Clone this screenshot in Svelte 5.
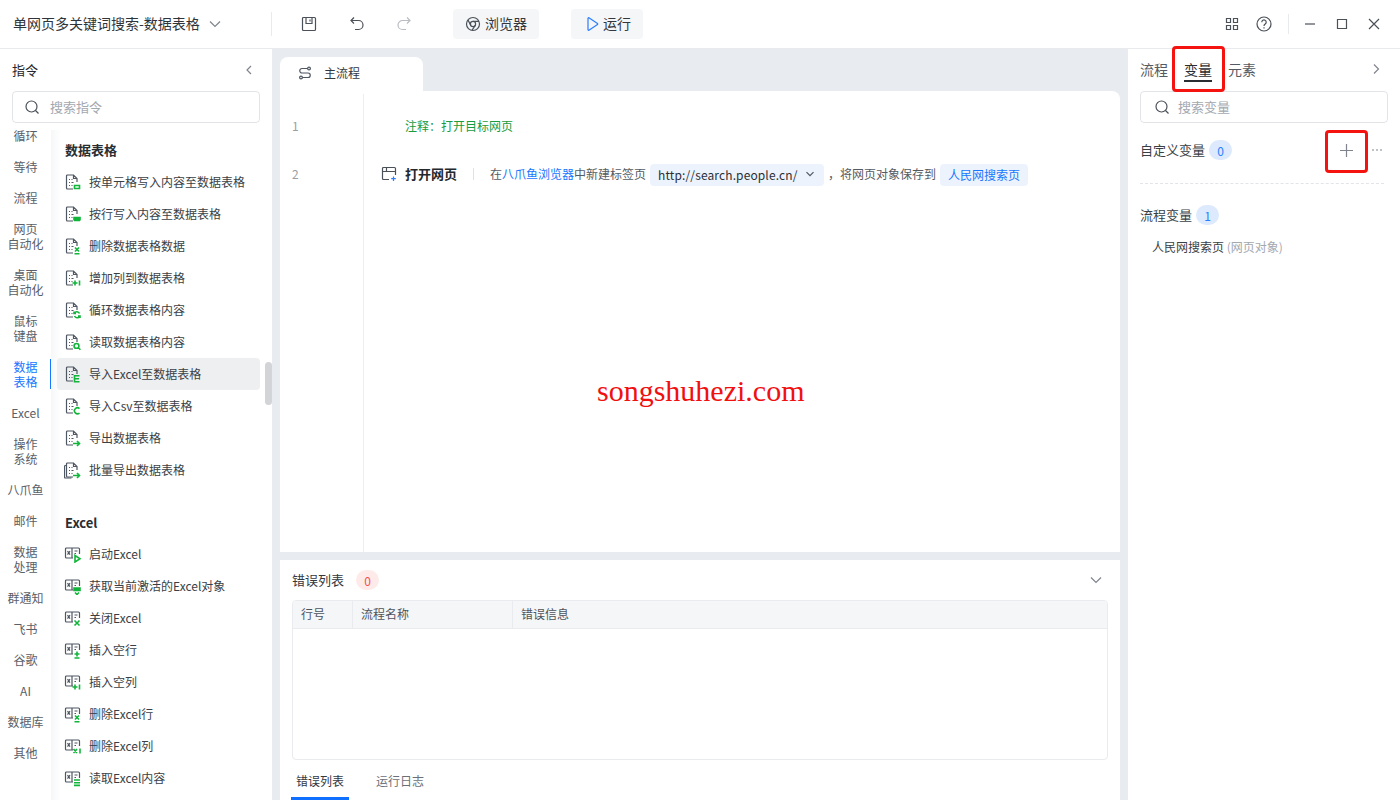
<script>
const rail = [
  ['循环'], ['等待'], ['流程'], ['网页', '自动化'], ['桌面', '自动化'], ['鼠标', '键盘'],
  ['数据', '表格'], ['Excel'], ['操作', '系统'], ['八爪鱼'], ['邮件'], ['数据', '处理'],
  ['群通知'], ['飞书'], ['谷歌'], ['AI'], ['数据库'], ['其他']
]

// green corner marks on the command icons
const marks = {
  cell: 'M10.500 12.500h5v3h-5z',
  row: 'M10 12.500h6v.8h-6zM10 14h6v.8h-6zM10 15.500h6',
  del: 'M11 10.500l4 4m0-4l-4 4M10.500 16.800h5',
  addcol: 'M8.500 14h5M11 11.500v5M15.500 11.500v5',
  loop: 'M15.500 12.500a3 3 0 0 0-5.200-.5M10.500 15a3 3 0 0 0 5.200.5M10 10.500V12.500h2M16 17v-2h-2',
  find: 'M12.500 10.500a2.400 2.400 0 1 1 0 4.800a2.400 2.400 0 0 1 0-4.800zM14.400 14.800l2 2',
  e: 'M15.500 10.800h-5v6h5M10.500 13.800h4.500',
  c: 'M15.500 11.600a3 3 0 1 0 0 4.400',
  out: 'M9 14.500h6.500M13 12l2.500 2.500L13 17',
  play: 'M11 10.500v6.500l5-3.250z',
  save: 'M10 11h6v2.500h-6zM10 12h6M11 15.500l2 2l2-2',
  close: 'M10.500 11.500l5 5m0-5l-5 5',
  addrow: 'M13 10.500v5M10.500 13h5M10.500 17h5',
  delrow: 'M11 10.500l4 4m0-4l-4 4M10.500 16.800h5',
  delcol: 'M9.500 12l3.500 4m0-4l-3.500 4M16 11.500v5',
  read: 'M10 11h6M10 13.700h6M10 16.400h6'
}

const groups = [
  {
    title: '数据表格',
    icon: 'doc',
    rows: [
      ['按单元格写入内容至数据表格', 'cell'],
      ['按行写入内容至数据表格', 'row'],
      ['删除数据表格数据', 'del'],
      ['增加列到数据表格', 'addcol'],
      ['循环数据表格内容', 'loop'],
      ['读取数据表格内容', 'find'],
      ['导入Excel至数据表格', 'e', true],
      ['导入Csv至数据表格', 'c'],
      ['导出数据表格', 'out'],
      ['批量导出数据表格', 'out', false, true]
    ]
  },
  {
    title: 'Excel',
    icon: 'xls',
    rows: [
      ['启动Excel', 'play'],
      ['获取当前激活的Excel对象', 'save'],
      ['关闭Excel', 'close'],
      ['插入空行', 'addrow'],
      ['插入空列', 'addcol'],
      ['删除Excel行', 'delrow'],
      ['删除Excel列', 'delcol'],
      ['读取Excel内容', 'read']
    ]
  }
]
</script>

<div class="app">
  <header class="topbar">
    <div class="title">
      <span>单网页多关键词搜索-数据表格</span>
      <svg width="12" height="12" viewBox="0 0 12 12" class="ml"><path d="M1 3.500l5 5 5-5" class="ln grey" /></svg>
    </div>
    <div class="tools">
      <svg width="16" height="16" viewBox="0 0 16 16"><path d="M2.500 1.500h11a1 1 0 0 1 1 1v11a1 1 0 0 1-1 1h-11a1 1 0 0 1-1-1v-11a1 1 0 0 1 1-1zM5 1.500v6h6v-6M9 3.500v2" class="ln dark" /></svg>
      <svg class="undo" width="16" height="16" viewBox="0 0 16 16"><path d="M5 1.500L2 4.500l3 3M2 4.500h7.500a4.500 4.500 0 0 1 0 9H6" class="ln dark" /></svg>
      <svg class="redo" width="16" height="16" viewBox="0 0 16 16"><path d="M11 1.500l3 3-3 3M14 4.500H6.500a4.500 4.500 0 0 0 0 9H10" class="ln faint" /></svg>
      <div class="btn browser">
        <svg width="16" height="16" viewBox="0 0 16 16"><circle cx="8" cy="8" r="6.500" class="ln dark" /><circle cx="8" cy="8" r="2.600" class="ln dark" /><path d="M8 5.400h6M5.800 9.400L3 4M10.200 9.400L7 14.400" class="ln dark" /></svg>
        <span>浏览器</span>
      </div>
      <div class="btn run">
        <svg width="14" height="16" viewBox="0 0 14 16"><path d="M3 2.200v11.600a.6.6 0 0 0 .9.5l8.600-5.800a.6.6 0 0 0 0-1L3.900 1.700a.6.6 0 0 0-.9.5z" class="ln blue" /></svg>
        <span>运行</span>
      </div>
    </div>
    <div class="winctl">
      <svg width="14" height="14" viewBox="0 0 14 14"><path d="M1.500 1.500h4v4h-4zM8.500 1.500h4v4h-4zM1.500 8.500h4v4h-4zM8.500 8.500h4v4h-4z" class="ln dark" /></svg>
      <svg class="help" width="16" height="16" viewBox="0 0 16 16"><circle cx="8" cy="8" r="7" class="ln dark" /><path d="M5.800 6.200a2.200 2.200 0 1 1 3.400 1.800c-.8.500-1.200 1-1.200 1.900M8 11.200v1.200" class="ln dark" /></svg>
      <i class="vsep"></i>
      <svg class="min" width="12" height="12" viewBox="0 0 12 12"><path d="M1 6h10" class="ln dark" /></svg>
      <svg class="max" width="12" height="12" viewBox="0 0 12 12"><path d="M1.500 1.500h9v9h-9z" class="ln dark" /></svg>
      <svg class="cls" width="12" height="12" viewBox="0 0 12 12"><path d="M1 1l10 10M11 1L1 11" class="ln dark" /></svg>
    </div>
  </header>

  <div class="body">
    <aside class="left">
      <div class="left-head">
        <span>指令</span>
        <svg width="10" height="10" viewBox="0 0 10 10"><path d="M7 1L3 5l4 4" class="ln grey" /></svg>
      </div>
      <div class="search">
        <svg width="16" height="16" viewBox="0 0 16 16"><circle cx="7.500" cy="7.500" r="5.500" class="ln dark" /><path d="M11.500 11.500l3 3" class="ln dark" /></svg>
        <span>搜索指令</span>
      </div>
      <div class="cmds">
        <nav class="rail">
          {#each rail as lines}
            <div class="rail-item" class:on={lines[0] === '数据' && lines[1] === '表格'}>
              {#each lines as l}<div>{l}</div>{/each}
            </div>
          {/each}
        </nav>
        <div class="list">
          {#each groups as g}
            <section class="group">
              <h4>{g.title}</h4>
              {#each g.rows as r}
                <div class="row" class:active={r[2]}>
                  <svg width="18" height="18" viewBox="0 0 18 18">
                    {#if g.icon === 'doc'}
                      <path d="M9 16H3.500a1 1 0 0 1-1-1V3a1 1 0 0 1 1-1h6l3.500 3.500V9M9.500 2v3.500H13M5 6.500h1M7.500 6.500h1M5 9.500h1M7.500 9.500h2M5 12.500h1M7.500 12.500h1" class="ln slate" />
                      {#if r[3]}<path d="M2.500 4.500H1.500a1 1 0 0 0-1 1V16a1 1 0 0 0 1 1h6" class="ln slate" />{/if}
                    {:else}
                      <path d="M8 3H2.500a1 1 0 0 0-1 1v8a1 1 0 0 0 1 1H8zM8 3h6.500a1 1 0 0 1 1 1v5M8 13h1M10.500 6h3M10.500 8.500h1.500M3.500 6.200l2.500 3.500m0-3.500L3.500 9.700" class="ln slate" />
                    {/if}
                    <path d={marks[r[1]]} class="ln green" />
                  </svg>
                  <span>{r[0]}</span>
                </div>
              {/each}
            </section>
          {/each}
          <div class="thumb"></div>
        </div>
      </div>
    </aside>

    <main class="center">
      <div class="tab">
        <svg width="14" height="14" viewBox="0 0 14 14"><path d="M9.500 2.500H4a2.200 2.200 0 0 0 0 4.500h6a2.200 2.200 0 0 1 0 4.500H4.500" class="ln slate" /><circle cx="11" cy="2.500" r="1.400" class="ln slate" /><circle cx="3" cy="11.500" r="1.400" class="ln slate" /></svg>
        <span>主流程</span>
      </div>
      <div class="editor">
        <div class="code-line first">
          <span class="no">1</span>
          <span class="note">注释：打开目标网页</span>
        </div>
        <div class="code-line">
          <span class="no">2</span>
          <svg class="step-ico" width="16" height="16" viewBox="0 0 16 16"><path d="M8 13.500H2.500a1 1 0 0 1-1-1v-10a1 1 0 0 1 1-1h11a1 1 0 0 1 1 1V9M1.500 5.500h13M5.500 1.500v4" class="ln dark" /><path d="M12.500 10.500v4.500M10.200 12.700h4.600" class="ln blue" /></svg>
          <b>打开网页</b>
          <i class="step-sep"></i>
          <span class="desc">在<a>八爪鱼浏览器</a>中新建标签页</span>
          <span class="chip url">http://search.people.cn/
            <svg width="8" height="8" viewBox="0 0 8 8"><path d="M.5 2.200L4 5.700l3.500-3.500" class="ln slate" /></svg>
          </span>
          <span class="desc after">，将网页对象保存到</span>
          <span class="chip var">人民网搜索页</span>
        </div>
        <div class="mark">songshuhezi.com</div>
      </div>
      <div class="errors">
        <div class="err-head">
          <span>错误列表</span>
          <em class="badge red">0</em>
          <svg width="12" height="12" viewBox="0 0 12 12"><path d="M1 3.500l5 5 5-5" class="ln grey" /></svg>
        </div>
        <div class="table">
          <div class="thead">
            <div class="c1">行号</div>
            <div class="c2">流程名称</div>
            <div class="c3">错误信息</div>
          </div>
        </div>
        <div class="err-tabs">
          <span class="sel">错误列表</span>
          <span>运行日志</span>
        </div>
      </div>
    </main>

    <aside class="right">
      <div class="r-tabs">
        <span>流程</span>
        <span class="sel">变量</span>
        <span>元素</span>
        <svg width="10" height="12" viewBox="0 0 10 12"><path d="M3 1.500L7.500 6 3 10.500" class="ln grey" /></svg>
      </div>
      <div class="search r">
        <svg width="16" height="16" viewBox="0 0 16 16"><circle cx="7.500" cy="7.500" r="5.500" class="ln dark" /><path d="M11.500 11.500l3 3" class="ln dark" /></svg>
        <span>搜索变量</span>
      </div>
      <div class="var-head custom">
        <span>自定义变量</span>
        <em class="badge">0</em>
        <svg class="plus" width="13" height="13" viewBox="0 0 13 13"><path d="M6.500 0v13M0 6.500h13" class="ln grey" /></svg>
        <svg class="dots" width="10" height="2" viewBox="0 0 10 2"><path d="M0 1h2M4 1h2M8 1h2" class="ln grey" /></svg>
      </div>
      <div class="dash"></div>
      <div class="var-head">
        <span>流程变量</span>
        <em class="badge">1</em>
      </div>
      <div class="var-row">人民网搜索页 <span>(网页对象)</span></div>
      <div class="redbox a"></div>
      <div class="redbox b"></div>
    </aside>
  </div>
</div>

<style>
  :global(body) {
    margin: 0;
    background: #fff;
  }

  .app {
    width: 1400px;
    height: 800px;
    display: flex;
    flex-direction: column;
    overflow: hidden;
    font-family: "Noto Sans CJK SC", "Noto Sans", sans-serif;
    font-size: 12px;
    color: #33383f;
  }

  svg {
    flex: none;
    display: block;
  }

  .ln {
    fill: none;
    stroke-width: 1.2;
  }
  .dark { stroke: #4b5159; }
  .grey { stroke: #80858d; }
  .faint { stroke: #b9bcc2; }
  .slate { stroke: #4f5762; stroke-width: 1.2; }
  .blue { stroke: #2a7fff; }
  .green { stroke: #10b53a; stroke-width: 1.6; }

  /* top bar */
  .topbar {
    height: 48px;
    flex: none;
    display: flex;
    align-items: center;
    border-bottom: 1px solid #e8eaee;
  }
  .title {
    width: 258px;
    height: 24px;
    margin-left: 13px;
    display: flex;
    align-items: center;
    border-right: 1px solid #e8eaee;
    font-size: 14px;
    color: #2f343a;
  }
  .title span { padding-bottom: 2px; }
  .ml { margin-left: 9px; }
  .tools {
    display: flex;
    align-items: center;
    margin-left: 29px;
  }
  .undo { margin-left: 32px; }
  .redo { margin-left: 31px; }
  .btn {
    height: 30px;
    display: flex;
    align-items: center;
    gap: 4px;
    border-radius: 4px;
    background: #f5f6f8;
    font-size: 14px;
  }
  .btn span { padding-bottom: 2px; }
  .browser {
    margin-left: 41px;
    width: 86px;
    padding-left: 12px;
    box-sizing: border-box;
  }
  .run {
    margin-left: 32px;
    width: 72px;
    padding-left: 14px;
    box-sizing: border-box;
  }
  .winctl {
    margin-left: auto;
    display: flex;
    align-items: center;
    padding-right: 20px;
  }
  .help { margin-left: 17px; }
  .vsep {
    width: 1px;
    height: 20px;
    background: #e8eaee;
    margin: 0 15px 0 16px;
  }
  .max { margin-left: 20px; }
  .cls { margin-left: 20px; }

  .body {
    flex: 1;
    min-height: 0;
    display: flex;
  }

  /* left column */
  .left {
    width: 272px;
    flex: none;
    display: flex;
    flex-direction: column;
    background: #fff;
  }
  .left-head {
    height: 42px;
    flex: none;
    padding: 0 18px 0 12px;
    display: flex;
    align-items: center;
    justify-content: space-between;
    font-size: 13px;
    color: #23272c;
  }
  .left-head span { padding-bottom: 2px; }
  .search {
    flex: none;
    height: 32px;
    width: 248px;
    margin-left: 12px;
    box-sizing: border-box;
    display: flex;
    align-items: center;
    gap: 10px;
    padding-left: 11px;
    border: 1px solid #e2e4e8;
    border-radius: 4px;
    font-size: 13px;
    color: #a4a8af;
  }
  .search span { padding-bottom: 2px; }
  .cmds {
    flex: 1;
    min-height: 0;
    margin-top: 7px;
    display: flex;
    overflow: hidden;
  }
  .rail {
    width: 51px;
    flex: none;
    margin-top: -10px;
    text-align: center;
    color: #5a6068;
  }
  .rail-item {
    padding: 8px 0;
    line-height: 15px;
    position: relative;
  }
  .rail-item.on {
    color: #1677ff;
  }
  .rail-item.on::after {
    content: '';
    position: absolute;
    right: -1px;
    top: 8px;
    bottom: 8px;
    width: 2px;
    background: #1677ff;
  }
  .list {
    flex: 1;
    position: relative;
    background: linear-gradient(90deg, #f6f7f8, #fff 10px);
  }
  .group + .group { margin-top: 16px; }
  h4 {
    margin: 0;
    height: 16px;
    padding: 12px 0 8px 14px;
    line-height: 16px;
    font-size: 13px;
    font-weight: 700;
    color: #2a2e33;
  }
  .group + .group h4 {
    padding: 13px 0 7px 14px;
  }
  .row {
    width: 203px;
    height: 32px;
    margin-left: 6px;
    padding-left: 7px;
    box-sizing: border-box;
    display: flex;
    align-items: center;
    gap: 7px;
    border-radius: 4px;
    color: #3a3f46;
  }
  .row span { padding-bottom: 2px; }
  .row svg { margin-bottom: 1px; }
  .row.active { background: #eeeff1; }
  .thumb {
    position: absolute;
    right: 0;
    top: 232px;
    width: 7px;
    height: 43px;
    border-radius: 4px;
    background: #d2d4d8;
  }

  /* middle column */
  .center {
    flex: 1;
    min-width: 0;
    background: #e8ebf0;
    padding: 8px 8px 0;
    display: flex;
    flex-direction: column;
    position: relative;
  }
  .tab {
    width: 143px;
    height: 34px;
    flex: none;
    box-sizing: border-box;
    padding: 0 0 2px 18px;
    display: flex;
    align-items: center;
    gap: 12px;
    background: #fff;
    border-radius: 8px 8px 0 0;
  }
  .tab span { padding-bottom: 2px; }
  .editor {
    height: 461px;
    flex: none;
    background: #fff;
    border-radius: 0 8px 0 0;
    position: relative;
    display: flex;
    flex-direction: column;
  }
  .editor::before {
    content: '';
    position: absolute;
    left: 83px;
    top: 3px;
    bottom: 0;
    width: 1px;
    background: #eceef1;
  }
  .code-line {
    height: 48px;
    flex: none;
    display: flex;
    align-items: center;
  }
  .code-line.first { margin-top: 11px; }
  .no {
    width: 101px;
    flex: none;
    padding-left: 12px;
    padding-bottom: 2px;
    box-sizing: border-box;
    color: #9a9ea5;
  }
  .first .no { width: 125px; }
  .note { color: #1a9b3c; padding-bottom: 2px; }
  .step-ico { margin-right: 8px; }
  .code-line b {
    font-size: 13px;
    color: #24282d;
    font-weight: 700;
    padding-bottom: 2px;
  }
  .step-sep {
    width: 1px;
    height: 12px;
    margin: 0 16px;
    background: #dfe1e5;
  }
  .desc { color: #555b63; padding-bottom: 2px; }
  .desc a { color: #1677ff; }
  .after { margin: 0 4px; }
  .chip {
    height: 22px;
    margin-top: 2px;
    padding: 0 8px 2px;
    box-sizing: border-box;
    display: inline-flex;
    align-items: center;
    border-radius: 4px;
    background: #edf3fd;
  }
  .url {
    margin-left: 4px;
    width: 174px;
    color: #2b2f35;
    letter-spacing: .12px;
    justify-content: space-between;
    padding-right: 10px;
  }
  .var { color: #1677ff; }
  .mark {
    position: absolute;
    left: 317px;
    top: 283px;
    font-family: "Liberation Serif", serif;
    font-size: 30px;
    line-height: 34px;
    color: #f01010;
  }
  .errors {
    flex: 1;
    min-height: 0;
    margin-top: 8px;
    background: #fff;
    padding: 0 12px;
    display: flex;
    flex-direction: column;
  }
  .err-head {
    height: 40px;
    flex: none;
    display: flex;
    align-items: center;
    font-size: 13px;
    color: #33383f;
  }
  .err-head span { padding-bottom: 2px; }
  .err-head svg { margin-left: auto; margin-right: 6px; }
  .err-head .badge { margin-left: 12px; }
  .badge {
    min-width: 23px;
    height: 20px;
    border-radius: 10px;
    margin-left: 4px;
    display: inline-flex;
    align-items: center;
    justify-content: center;
    font-style: normal;
    font-size: 12px;
    color: #2a7fff;
    background: #dde9fd;
  }
  .badge.red {
    color: #f0524f;
    background: #feebe9;
  }
  .table {
    height: 160px;
    flex: none;
    box-sizing: border-box;
    border: 1px solid #e9ebee;
    border-radius: 4px;
    overflow: hidden;
  }
  .thead {
    height: 28px;
    box-sizing: border-box;
    display: flex;
    background: #f5f6f8;
    border-bottom: 1px solid #e9ebee;
    line-height: 25px;
    color: #4e545c;
  }
  .thead div {
    box-sizing: border-box;
    padding-left: 8px;
    border-right: 1px solid #e9ebee;
  }
  .c1 { width: 60px; }
  .c2 { width: 160px; }
  .c3 { flex: 1; border-right: 0 !important; }
  .err-tabs {
    height: 40px;
    flex: none;
    display: flex;
    gap: 32px;
    margin-left: 4px;
    line-height: 41px;
    color: #6b7078;
  }
  .err-tabs .sel {
    color: #33383f;
    position: relative;
    display: block;
    height: 40px;
  }
  .err-tabs .sel::after {
    content: '';
    position: absolute;
    left: -5px;
    right: -5px;
    bottom: 0;
    height: 3px;
    background: #0f6fff;
  }

  /* right column */
  .right {
    width: 272px;
    flex: none;
    box-sizing: border-box;
    padding: 0 12px;
    background: #fff;
    position: relative;
  }
  .r-tabs {
    height: 42px;
    display: flex;
    align-items: center;
    gap: 16px;
    font-size: 14px;
    color: #555b63;
  }
  .r-tabs span {
    line-height: 20px;
    padding-bottom: 2px;
  }
  .r-tabs .sel {
    color: #2a2e33;
    position: relative;
  }
  .r-tabs .sel::after {
    content: '';
    position: absolute;
    left: 0;
    right: 0;
    bottom: -1px;
    height: 2px;
    background: #2a2e33;
  }
  .r-tabs svg { margin: 0 7px 2px auto; }
  .search.r {
    margin-left: 0;
    padding-left: 13px;
    gap: 8px;
  }
  .var-head {
    display: flex;
    align-items: center;
    height: 20px;
    font-size: 13px;
    color: #3a3f46;
  }
  .var-head span { padding-bottom: 2px; }
  .custom {
    margin-top: 17px;
    position: relative;
  }
  .plus {
    margin-left: auto;
    margin-right: 19px;
  }
  .dots {
    margin-right: 6px;
  }
  .dash {
    margin-top: 23px;
    margin-bottom: 21px;
    border-top: 1px dashed #e2e4e8;
    margin-right: 4px;
  }
  .var-row {
    margin: 13px 0 0 12px;
    line-height: 18px;
    color: #3a3f46;
  }
  .var-row span { color: #a4a8af; }
  .redbox {
    position: absolute;
    box-sizing: border-box;
    border: 3px solid #f5130f;
    border-radius: 4px;
  }
  .redbox.a {
    left: 44px;
    top: -3px;
    width: 53px;
    height: 46px;
  }
  .redbox.b {
    left: 197px;
    top: 81px;
    width: 43px;
    height: 43px;
  }
</style>
